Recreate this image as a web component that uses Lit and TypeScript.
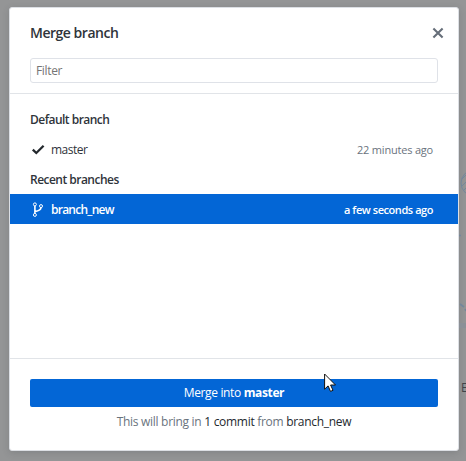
import { LitElement, html, css } from "lit";
import { customElement } from "lit/decorators.js";

@customElement("app-root")
export class AppRoot extends LitElement {
  static styles = css`
    :host {
      display: block;
      position: relative;
      box-sizing: border-box;
      width: 466px;
      height: 461px;
      padding: 7px 7px 10px 9px;
      overflow: hidden;
      background: #949596;
      font: 12px/18px "Open Sans", "Noto Sans", sans-serif;
      color: #2f343a;
      white-space: nowrap;
    }
    * { box-sizing: border-box; }
    .dialog {
      position: relative;
      display: flex;
      flex-direction: column;
      width: 450px;
      height: 444px;
      background: #fff;
      border: 1px solid #dcdfe4;
      border-radius: 3px;
      box-shadow: 0 2px 7px rgba(50, 54, 60, 0.18);
    }
    header {
      height: 86px;
      padding: 15px 20px 0;
      border-bottom: 1px solid #e1e4e8;
    }
    .title-row {
      display: flex;
      justify-content: space-between;
      height: 35px;
    }
    h1 {
      margin: 0;
      font-size: 14px;
      line-height: 20px;
      font-weight: 600;
      letter-spacing: -0.48px;
    }
    .close { width: 12px; height: 12px; margin: 4px -6px 0 0; }
    .filter {
      display: block;
      width: 408px;
      height: 25px;
      padding: 0 5px;
      border: 1px solid #dfe2e8;
      border-radius: 3px;
      font: inherit;
      letter-spacing: -0.35px;
      background: #fff;
      outline: none;
    }
    .filter::placeholder { color: #757575; opacity: 1; }
    main { height: 265px; padding-top: 10px; border-bottom: 1px solid #e1e4e8; }
    h2 {
      margin: 0;
      height: 30px;
      padding: 0 20px;
      font-size: 12px;
      line-height: 32px;
      font-weight: 600;
      letter-spacing: -0.52px;
    }
    .row {
      display: flex;
      align-items: center;
      height: 30px;
      padding: 1px 25px 0 20px;
    }
    .row svg { width: 16px; height: 16px; margin-right: 5px; }
    .name { flex: 1; letter-spacing: -0.5px; }
    .time { font-size: 11px; color: #6a737d; letter-spacing: -0.2px; }
    .selected, .selected .time { color: #fff; font-weight: 600; }
    .selected .name { letter-spacing: -0.75px; }
    .selected .time { letter-spacing: -0.44px; }
    .selected { background: #0366d6; }
    footer { padding: 20px 20px 0; text-align: center; }
    button {
      display: block;
      width: 100%;
      height: 28px;
      padding: 0;
      border: 0;
      border-radius: 2px;
      background: #0366d6;
      color: #fff;
      font: inherit;
      font-weight: 500;
      letter-spacing: -0.36px;
    }
    .note { margin: 6px 0 0; color: #6a737d; letter-spacing: -0.29px; }
    .note span { color: #24292e; }
    .behind { position: absolute; left: 459px; top: 0; width: 7px; height: 461px; }
    .cursor { position: absolute; left: 324px; top: 373px; width: 13px; height: 20px; }
  `;

  render() {
    return html`
      <section class="dialog">
        <header>
          <div class="title-row">
            <h1>Merge branch</h1>
            <svg class="close" viewBox="0 0 12 12">
              <path d="M1.4 1.4L10.6 10.6M10.6 1.4L1.4 10.6" fill="none" stroke="#666e79" stroke-width="2.1" />
            </svg>
          </div>
          <input class="filter" placeholder="Filter" />
        </header>
        <main>
          <h2>Default branch</h2>
          <div class="row">
            <svg viewBox="0 0 16 16">
              <path d="M2.8 7.6L6.3 11L13.6 3.8" fill="none" stroke="#24292e" stroke-width="2.3" />
            </svg>
            <span class="name">master</span><span class="time">22 minutes ago</span>
          </div>
          <h2>Recent branches</h2>
          <div class="row selected">
            <svg viewBox="0 0 16 16" fill="none" stroke="#fff">
              <circle cx="4.9" cy="2.4" r="1.5" />
              <circle cx="4.9" cy="12.9" r="1.5" />
              <circle cx="11" cy="4.1" r="1.5" />
              <path d="M4.9 3.9V11.4M11 5.6C11 8.1 8.5 9 4.9 9.6" stroke-width="1.6" />
            </svg>
            <span class="name">branch_new</span><span class="time">a few seconds ago</span>
          </div>
        </main>
        <footer>
          <button>Merge into <b>master</b></button>
          <p class="note">This will bring in <span>1 commit</span> from <span>branch_new</span></p>
        </footer>
      </section>
      <svg class="behind" viewBox="0 0 7 461" fill="none" stroke="#74879c">
        <circle cx="15" cy="183" r="13" />
        <path d="M3 179l4-4M3 186l4-4M5 190l3-3" />
        <path d="M0 235.5h2M1 304l4 3M6 309l1 2" stroke-width="1.6" />
        <path d="M0 325.5h7" stroke="#8b9097" stroke-width="5" />
        <text x="2" y="392" font-size="12" fill="#40444a" stroke="none">E</text>
      </svg>
      <svg class="cursor" viewBox="0 0 13 20">
        <path d="M.6 1V16.2L4.1 12.9L6.5 18.4L9 17.3L6.6 12H11.5Z" fill="#fff" stroke="#111" />
      </svg>
    `;
  }
}
